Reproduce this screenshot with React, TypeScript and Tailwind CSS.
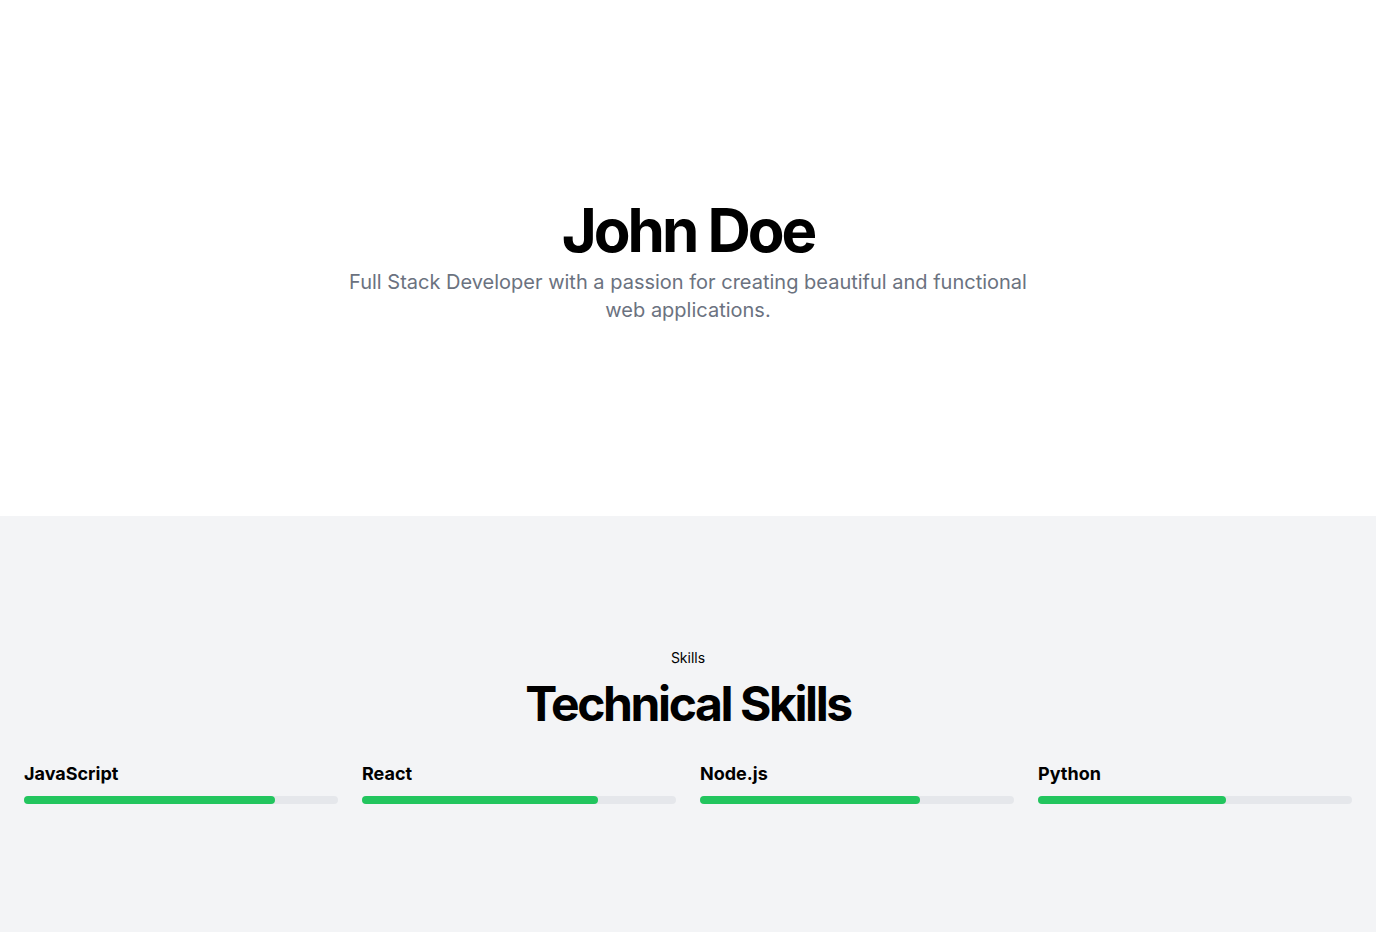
import React from "react";

const SKILLS = [
  { id: "js", name: "JavaScript", level: 80 },
  { id: "react", name: "React", level: 75 },
  { id: "node", name: "Node.js", level: 70 },
  { id: "python", name: "Python", level: 60 },
];

const App = () => {
  return (
    <div className="min-h-screen bg-white font-['Inter',sans-serif] text-black">
      <section className="w-full pt-[200px] pb-[192px]">
        <div className="flex flex-col items-center px-6 text-center">
          <div className="space-y-2">
            <h1 className="text-6xl/none font-bold tracking-tighter">John Doe</h1>
            <p className="mx-auto max-w-[700px] text-xl text-[#6b7280]">
              Full Stack Developer with a passion for creating beautiful and functional web
              applications.
            </p>
          </div>
        </div>
      </section>
      <section className="w-full bg-[#f3f4f6] py-32">
        <div className="space-y-8 px-6">
          <div className="flex flex-col items-center text-center">
            <div className="space-y-2">
              <div className="inline-block rounded-lg px-3 py-1 text-sm">Skills</div>
              <h2 className="text-5xl/none font-bold tracking-tighter">Technical Skills</h2>
            </div>
          </div>
          <div className="grid grid-cols-4 gap-6">
            {SKILLS.map((skill) => {
              return (
                <div key={skill.id} className="space-y-2">
                  <h3 className="text-lg font-bold">{skill.name}</h3>
                  <div className="h-2 w-full rounded-full bg-[#e5e7eb]">
                    <div
                      className="h-2 rounded-full bg-[#22c55e]"
                      style={{ width: `${skill.level}%` }}
                    />
                  </div>
                </div>
              );
            })}
          </div>
        </div>
      </section>
    </div>
  );
};

export default App;
